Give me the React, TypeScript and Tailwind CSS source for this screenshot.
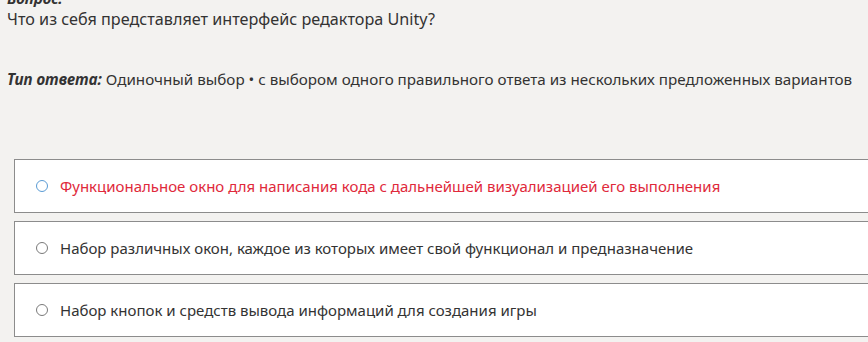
import React from 'react';

const OPTIONS = [
  { text: 'Функциональное окно для написания кода с дальнейшей визуализацией его выполнения', wrong: true },
  { text: 'Набор различных окон, каждое из которых имеет свой функционал и предназначение', wrong: false },
  { text: 'Набор кнопок и средств вывода информаций для создания игры', wrong: false },
];

export default function App() {
  return (
    <div
      className="w-[868px] h-[342px] overflow-hidden bg-[#f3f2f0] text-[#333333]"
      style={{ fontFamily: '"Noto Sans", "Open Sans", sans-serif' }}
    >
      <div className="px-[7px]">
        <div className="-mt-[12px] h-[20px] leading-[20px] text-[15px] font-bold italic">Вопрос:</div>
        <div className="h-[22px] leading-[22px] text-[16.2px]">Что из себя представляет интерфейс редактора Unity?</div>
        <div className="mt-[38px] h-[22px] leading-[22px] text-[15.2px]">
          <span className="font-bold italic">Тип ответа:</span> Одиночный выбор • с выбором одного правильного ответа из нескольких предложенных вариантов
        </div>
      </div>

      <div className="mt-[69px] ml-[14px] flex flex-col gap-[8px]">
        {OPTIONS.map((o) => (
          <div
            key={o.text}
            className="h-[54px] w-[870px] bg-white border border-[#8c8c8c] flex items-center pl-[21px] gap-[12px]"
          >
            <span
              className={`w-[12px] h-[12px] rounded-full border-[1.5px] ${o.wrong ? 'border-[#5a9bd4]' : 'border-[#7a7a7a]'}`}
            />
            <span className={`text-[15px] ${o.wrong ? 'text-[#e0293b]' : 'text-[#333333]'}`}>{o.text}</span>
          </div>
        ))}
      </div>
    </div>
  );
}
